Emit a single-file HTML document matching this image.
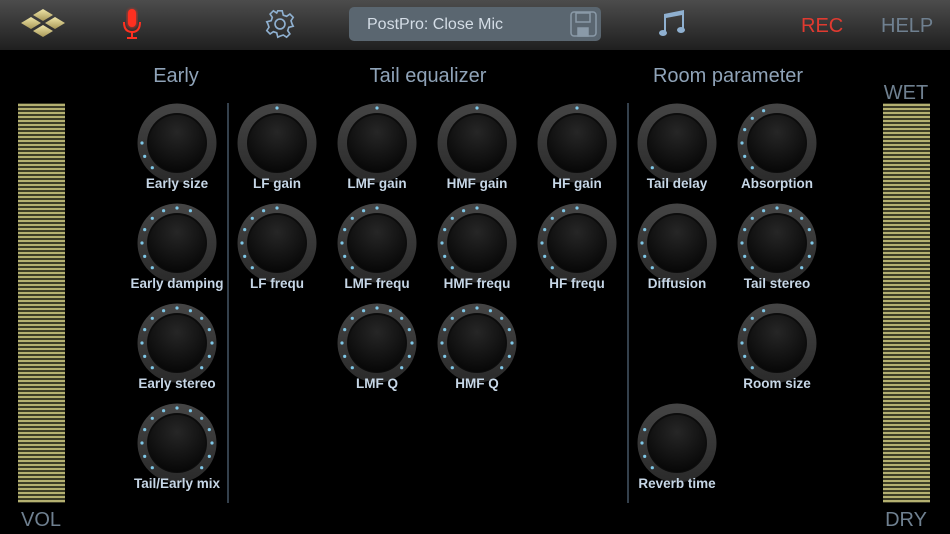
<!DOCTYPE html>
<html><head><meta charset="utf-8"><style>
html,body{margin:0;padding:0;background:#000;width:950px;height:534px;overflow:hidden}
svg{display:block}
</style></head><body>
<svg id="s" width="950" height="534" xmlns="http://www.w3.org/2000/svg" font-family="Liberation Sans, sans-serif">
<defs>
<linearGradient id="bar" x1="0" y1="0" x2="0" y2="1"><stop offset="0" stop-color="#4c4c4c"/><stop offset="1" stop-color="#1f1f1f"/></linearGradient>
<linearGradient id="ring" x1="0" y1="0" x2="0" y2="1"><stop offset="0" stop-color="#454545"/><stop offset="1" stop-color="#2a2a2a"/></linearGradient>
<radialGradient id="cap" cx="0.5" cy="0.3" r="0.75"><stop offset="0" stop-color="#262626"/><stop offset="1" stop-color="#050505"/></radialGradient>
<pattern id="str" width="4" height="4" patternUnits="userSpaceOnUse"><rect width="4" height="4" fill="#3c3c26"/><rect y="0" width="4" height="2" fill="#b4b070"/></pattern>
<linearGradient id="gold" x1="0" y1="0" x2="0" y2="1"><stop offset="0" stop-color="#f0e6a8"/><stop offset="1" stop-color="#a89858"/></linearGradient>
<filter id="glow"><feGaussianBlur stdDeviation="1.5"/></filter>
</defs>
<rect width="950" height="50" fill="url(#bar)"/>
<!-- logo -->
<g fill="url(#gold)">
<polygon points="43,9 53,15 43,21 33,15"/><polygon points="31,17 41,23 31,29 21,23"/><polygon points="55,17 65,23 55,29 45,23"/><polygon points="43,25 53,31 43,37 33,31"/>
</g>
<!-- mic -->
<g fill="#ff3020" stroke="#ff3020">
<g filter="url(#glow)" opacity="0.7"><rect x="127" y="9" width="10" height="19" rx="5" stroke="none"/></g>
<rect x="128" y="9" width="8" height="18" rx="4" stroke="none"/>
<path d="M124,22 Q124,32 132,32 Q140,32 140,22" fill="none" stroke-width="2"/>
<line x1="132" y1="32" x2="132" y2="37" stroke-width="2"/><line x1="127" y1="38" x2="137" y2="38" stroke-width="2"/>
</g>
<!-- gear -->
<g transform="translate(280,24) scale(1.1)" fill="none" stroke="#8fb0d0" stroke-width="1.5">
<path d="M-2,-12 L2,-12 L3,-8 L6,-7 L9,-9 L12,-6 L10,-3 L11,0 L12,2 L8,3 L7,6 L9,9 L6,12 L3,10 L0,11 L-2,12 L-3,8 L-6,7 L-9,9 L-12,6 L-10,3 L-11,0 L-12,-2 L-8,-3 L-7,-6 L-9,-9 L-6,-12 L-3,-10 Z"/>
<circle r="4.5"/>
</g>
<!-- preset -->
<rect x="349" y="7" width="252" height="34" rx="5" fill="#5a6670"/>
<text x="367" y="29" font-size="16" fill="#d4dde6">PostPro: Close Mic</text>
<g fill="none" stroke="#8a9aa8" stroke-width="1.5"><rect x="571" y="12" width="25" height="24" rx="3"/><rect x="576" y="13" width="14" height="9"/><rect x="578" y="28" width="10" height="8" fill="#8a9aa8"/></g>
<!-- note -->
<g fill="#8fb0d0"><path d="M664,14 L684,10 L684,30 L682,30 L682,15 L666,18 L666,33 L664,33 Z"/><ellipse cx="663" cy="33" rx="4" ry="3"/><ellipse cx="681" cy="30" rx="4" ry="3"/></g>
<text x="801" y="32" font-size="20" fill="#e03a30">REC</text>
<text x="881" y="32" font-size="20" fill="#6f8090">HELP</text>
<!-- meters -->
<rect x="18" y="103" width="47" height="400" fill="url(#str)"/>
<rect x="883" y="103" width="47" height="400" fill="url(#str)"/>
<text x="41" y="526" font-size="20" fill="#6f8090" text-anchor="middle">VOL</text>
<text x="906" y="99" font-size="20" fill="#6f8090" text-anchor="middle">WET</text>
<text x="906" y="526" font-size="20" fill="#6f8090" text-anchor="middle">DRY</text>
<!-- titles -->
<g font-size="20" fill="#8fa3b8" text-anchor="middle">
<text x="176" y="82">Early</text><text x="428" y="82">Tail equalizer</text><text x="728" y="82">Room parameter</text>
</g>
<line x1="228" y1="103" x2="228" y2="503" stroke="#34404c" stroke-width="2"/>
<line x1="628" y1="103" x2="628" y2="503" stroke="#34404c" stroke-width="2"/>
<g id="k"></g>
</svg>
<script>
var K=[
[177,143,"Early size",[0,1,2]],[177,243,"Early damping",8],[177,343,"Early stereo",13],[177,443,"Tail/Early mix",13],
[277,143,"LF gain",[6]],[377,143,"LMF gain",[6]],[477,143,"HMF gain",[6]],[577,143,"HF gain",[6]],
[277,243,"LF frequ",7],[377,243,"LMF frequ",7],[477,243,"HMF frequ",7],[577,243,"HF frequ",7],
[377,343,"LMF Q",13],[477,343,"HMF Q",13],
[677,143,"Tail delay",1],[777,143,"Absorption",6],[677,243,"Diffusion",4],[777,243,"Tail stereo",13],[777,343,"Room size",6],[677,443,"Reverb time",4]];
var h="";
K.forEach(function(k){var x=k[0],y=k[1],d=k[3];
h+='<circle cx="'+x+'" cy="'+y+'" r="39.5" fill="url(#ring)"/><circle cx="'+x+'" cy="'+y+'" r="30" fill="#0c0c0c"/><circle cx="'+x+'" cy="'+(y+0.5)+'" r="28.5" fill="url(#cap)"/>';
var idx=Array.isArray(d)?d:Array.from({length:d},function(_,i){return i});
idx.forEach(function(i){var a=(-135+22.5*i)*Math.PI/180;h+='<circle cx="'+(x+35*Math.sin(a)).toFixed(1)+'" cy="'+(y-35*Math.cos(a)).toFixed(1)+'" r="1.6" fill="#7fc8e8"/>';});
h+='<text x="'+x+'" y="'+(y+45)+'" font-size="13.5" font-weight="bold" fill="#c6d6e6" text-anchor="middle">'+k[2]+'</text>';});
document.getElementById("k").innerHTML=h;
</script>
</body></html>
